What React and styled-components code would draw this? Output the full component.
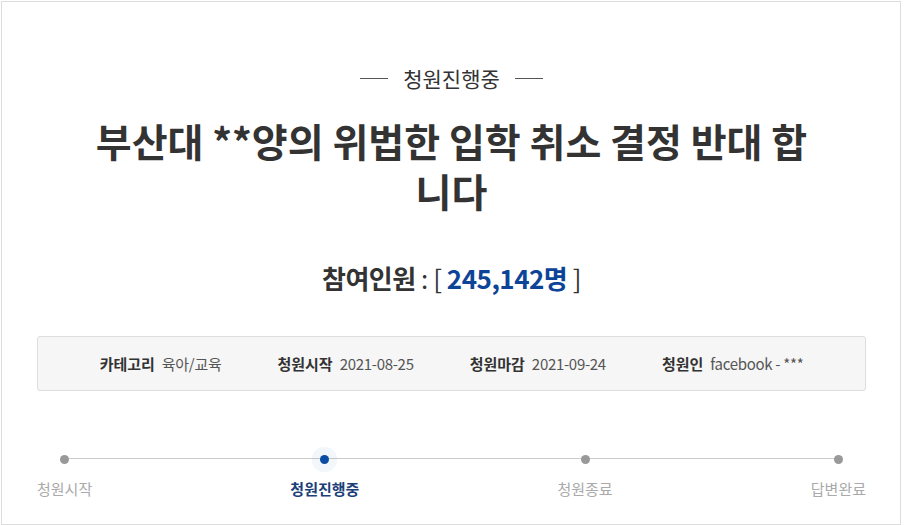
import React from 'react'
import styled, { createGlobalStyle } from 'styled-components'

const GlobalStyle = createGlobalStyle`
    body {
        margin: 0;
        background: #fff;
        font-family: "Noto Sans CJK KR", "Noto Sans", sans-serif;
        color: #333;
    }
`

const info = [
    { label: '카테고리', value: '육아/교육' },
    { label: '청원시작', value: '2021-08-25' },
    { label: '청원마감', value: '2021-09-24' },
    { label: '청원인', value: 'facebook - ***' },
]

const steps = ['청원시작', '청원진행중', '청원종료', '답변완료']

function App() {
    return (
        <>
            <GlobalStyle />
            <Frame>
                <Status>청원진행중</Status>
                <Title>부산대 **양의 위법한 입학 취소 결정 반대 합니다</Title>
                <Count>
                    참여인원 <Thin>: [</Thin> <Number>245,142명</Number> <Thin>]</Thin>
                </Count>
                <InfoBox>
                    {info.map(item => (
                        <InfoItem key={item.label}>
                            <InfoLabel>{item.label}</InfoLabel>
                            <InfoValue>{item.value}</InfoValue>
                        </InfoItem>
                    ))}
                </InfoBox>
                {/* progress: the line runs behind the dots, current step is the 2nd */}
                <Steps>
                    {steps.map((step, i) => (
                        <Step key={step}>
                            <DotRow>
                                <Dot active={i === 1 ? 1 : 0} />
                            </DotRow>
                            <StepLabel active={i === 1 ? 1 : 0}>{step}</StepLabel>
                        </Step>
                    ))}
                </Steps>
            </Frame>
        </>
    )
}

export default App


const Frame = styled.div`
    box-sizing: border-box;
    margin: 1px 0 0 1px;
    width: 900px;
    height: 524px;
    border: 1px solid #ddd;
    padding: 62px 34px 0 35px;
    display: flex;
    flex-direction: column;
    align-items: center;
`

const Status = styled.div`
    display: flex;
    align-items: center;
    gap: 15px;
    font-size: 21px;
    line-height: 28px;
    color: #333;
    &::before, &::after {
        content: '';
        width: 28px;
        height: 1px;
        background: #555;
    }
`

const Title = styled.h1`
    margin: 23px 0 0;
    width: 730px;
    text-align: center;
    font-size: 39px;
    line-height: 50px;
    font-weight: 700;
    color: #333;
`

const Count = styled.div`
    margin-top: 45px;
    font-size: 26px;
    line-height: 36px;
    font-weight: 700;
    color: #333;
    letter-spacing: -0.5px;
`

const Thin = styled.span`
    font-weight: 400;
`

const Number = styled.span`
    color: #0d4497;
`

const InfoBox = styled.div`
    box-sizing: border-box;
    margin-top: 40px;
    width: 100%;
    height: 55px;
    border: 1px solid #ddd;
    border-radius: 3px;
    background: #f6f6f6;
    display: flex;
    justify-content: center;
    align-items: center;
    gap: 56px;
`

const InfoItem = styled.div`
    display: flex;
    align-items: center;
    gap: 7px;
    font-size: 15px;
`

const InfoLabel = styled.span`
    font-weight: 700;
    color: #333;
`

const InfoValue = styled.span`
    color: #555;
    letter-spacing: -0.3px;
`

const Steps = styled.div`
    position: relative;
    margin-top: 56px;
    width: 100%;
    display: flex;
    justify-content: space-between;
    &::before {
        content: '';
        position: absolute;
        top: 11px;
        left: 27px;
        right: 27px;
        height: 1px;
        background: #ccc;
    }
`

const Step = styled.div`
    position: relative;
    display: flex;
    flex-direction: column;
    align-items: center;
`

const DotRow = styled.div`
    height: 24px;
    display: flex;
    align-items: center;
    justify-content: center;
`

const Dot = styled.span`
    width: 9px;
    height: 9px;
    border-radius: 50%;
    background: ${p => (p.active ? '#0b4da2' : '#999')};
    box-shadow: ${p => (p.active ? '0 0 0 8px rgba(11, 77, 162, 0.05)' : 'none')};
`

const StepLabel = styled.div`
    margin-top: 8px;
    font-size: 15px;
    line-height: 20px;
    font-weight: ${p => (p.active ? 700 : 400)};
    color: ${p => (p.active ? '#1c3f7a' : '#aaa')};
`
